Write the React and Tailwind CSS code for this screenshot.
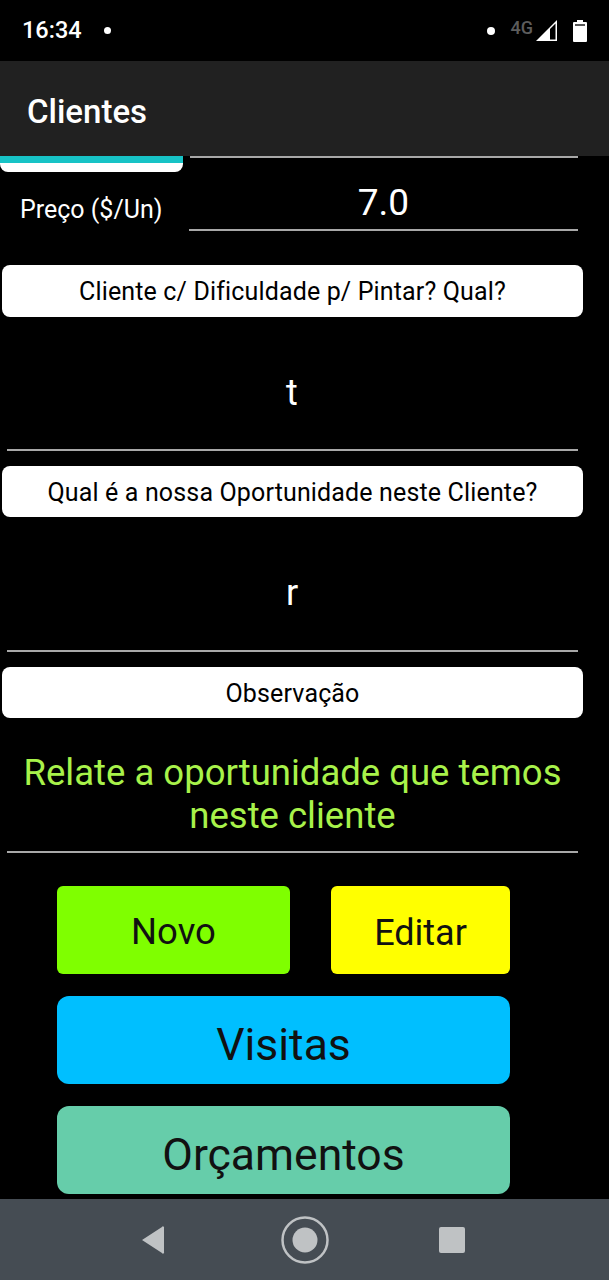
import React from "react";

const font = "font-['Roboto',sans-serif]";

const Pill = ({ children, className }) => (
  <div className={`ml-[2px] w-[581px] pt-[2px] bg-white rounded-lg flex items-center justify-center text-black text-[25px] tracking-[0.15px] ${className}`}>
    {children}
  </div>
);

const BigInput = ({ value, className }) => (
  <div className={`ml-[7px] w-[571px] border-b-2 border-[#a8a8a8] flex items-center justify-center text-white text-[36px] ${className}`}>
    <span className="mr-[1px] mt-[19px]">{value}</span>
  </div>
);

const StatusBar = () => (
  <div className="h-[61px] bg-black flex items-center text-white pl-[22px] pr-[22px]">
    <span className="text-[23.5px] font-medium">16:34</span>
    <span className="ml-[22px] w-[7px] h-[7px] rounded-full bg-white" />
    <div className="ml-auto flex items-center">
      <span className="w-[8px] h-[8px] rounded-full bg-white" />
      <span className="ml-[16px] mb-[7px] text-[18px] font-medium text-[#5c5c5c]">4G</span>
      <svg className="ml-[3px]" width="22" height="22" viewBox="0 0 22 22">
        <path d="M0 21 L21 0 V21 Z" fill="#fff" />
        <path d="M14 9 L19.5 3.5 V19.5 H14 Z" fill="#000" />
      </svg>
      <svg className="ml-[15px]" width="14" height="22" viewBox="0 0 14 22">
        <path d="M4 0 H10 V2 H13 A1 1 0 0 1 14 3 V21 A1 1 0 0 1 13 22 H1 A1 1 0 0 1 0 21 V3 A1 1 0 0 1 1 2 H4 Z" fill="#fff" />
        <rect x="2" y="4" width="10" height="2" fill="#555" />
      </svg>
    </div>
  </div>
);

const NavBar = () => (
  <div className="h-[81px] bg-[#454c53] flex items-center justify-center">
    <svg width="340" height="50" viewBox="0 0 340 50">
      <path d="M7 25 L27 12 A1 1 0 0 1 29 13 V37 A1 1 0 0 1 27 38 Z" fill="#bfc2c4" />
      <circle cx="170" cy="25" r="22.5" fill="none" stroke="#bfc2c4" strokeWidth="2.5" />
      <circle cx="170" cy="25" r="12.5" fill="#bfc2c4" />
      <rect x="304" y="12" width="26" height="26" rx="2" fill="#bfc2c4" />
    </svg>
  </div>
);

export default function App() {
  return (
    <div className={`w-[609px] h-[1280px] bg-black overflow-hidden ${font}`}>
      <StatusBar />

      {/* app bar */}
      <div className="h-[95px] bg-[#212121] flex items-center pl-[27px] pt-[6px]">
        <h1 className="text-white text-[33px] font-medium">Clientes</h1>
      </div>

      {/* form, scrolled under the app bar */}
      <div className="h-[1043px] overflow-hidden">
        <div className="flex items-start">
          <div className="w-[183px] h-[16px] bg-white rounded-b-lg overflow-hidden">
            <div className="h-[7px] bg-[#17c3c6]" />
          </div>
          <div className="ml-[7px] w-[388px] h-[2px] border-b-2 border-[#a8a8a8]" />
        </div>

        <div className="flex items-end h-[59px]">
          <span className="ml-[20px] w-[169px] text-white text-[25px] mb-[3px]">Preço ($/Un)</span>
          <div className="w-[389px] h-[59px] border-b-2 border-[#a8a8a8] flex items-center justify-center text-white text-[37px]">
            <span className="mt-[5px]">7.0</span>
          </div>
        </div>

        <Pill className="mt-[34px] h-[52px]">Cliente c/ Dificuldade p/ Pintar? Qual?</Pill>
        <BigInput value="t" className="h-[134px]" />
        <Pill className="mt-[15px] h-[51px]">Qual é a nossa Oportunidade neste Cliente?</Pill>
        <BigInput value="r" className="h-[135px]" />
        <Pill className="mt-[15px] h-[51px]">Observação</Pill>

        <div className="ml-[7px] w-[571px] h-[135px] border-b-2 border-[#a8a8a8] flex items-center justify-center text-center text-[#a8f24a] text-[36.5px] leading-[43px]">
          <p className="w-[560px] mt-[19px]">Relate a oportunidade que temos neste cliente</p>
        </div>

        <div className="ml-[57px] w-[453px] mt-[33px] flex flex-col gap-[22px]">
          <div className="flex justify-between">
            <button className="w-[233px] h-[88px] pt-[5px] bg-[#7fff00] rounded-md text-[#111] text-[36.5px]">Novo</button>
            <button className="w-[179px] h-[88px] pt-[5px] bg-[#ffff00] rounded-md text-[#111] text-[36px]">Editar</button>
          </div>
          <button className="h-[88px] pt-[10px] bg-[#00bfff] rounded-xl text-[#111] text-[44.5px]">Visitas</button>
          <button className="h-[88px] pt-[10px] bg-[#66cdaa] rounded-xl text-[#111] text-[44.5px]">Orçamentos</button>
        </div>
      </div>

      <NavBar />
    </div>
  );
}
